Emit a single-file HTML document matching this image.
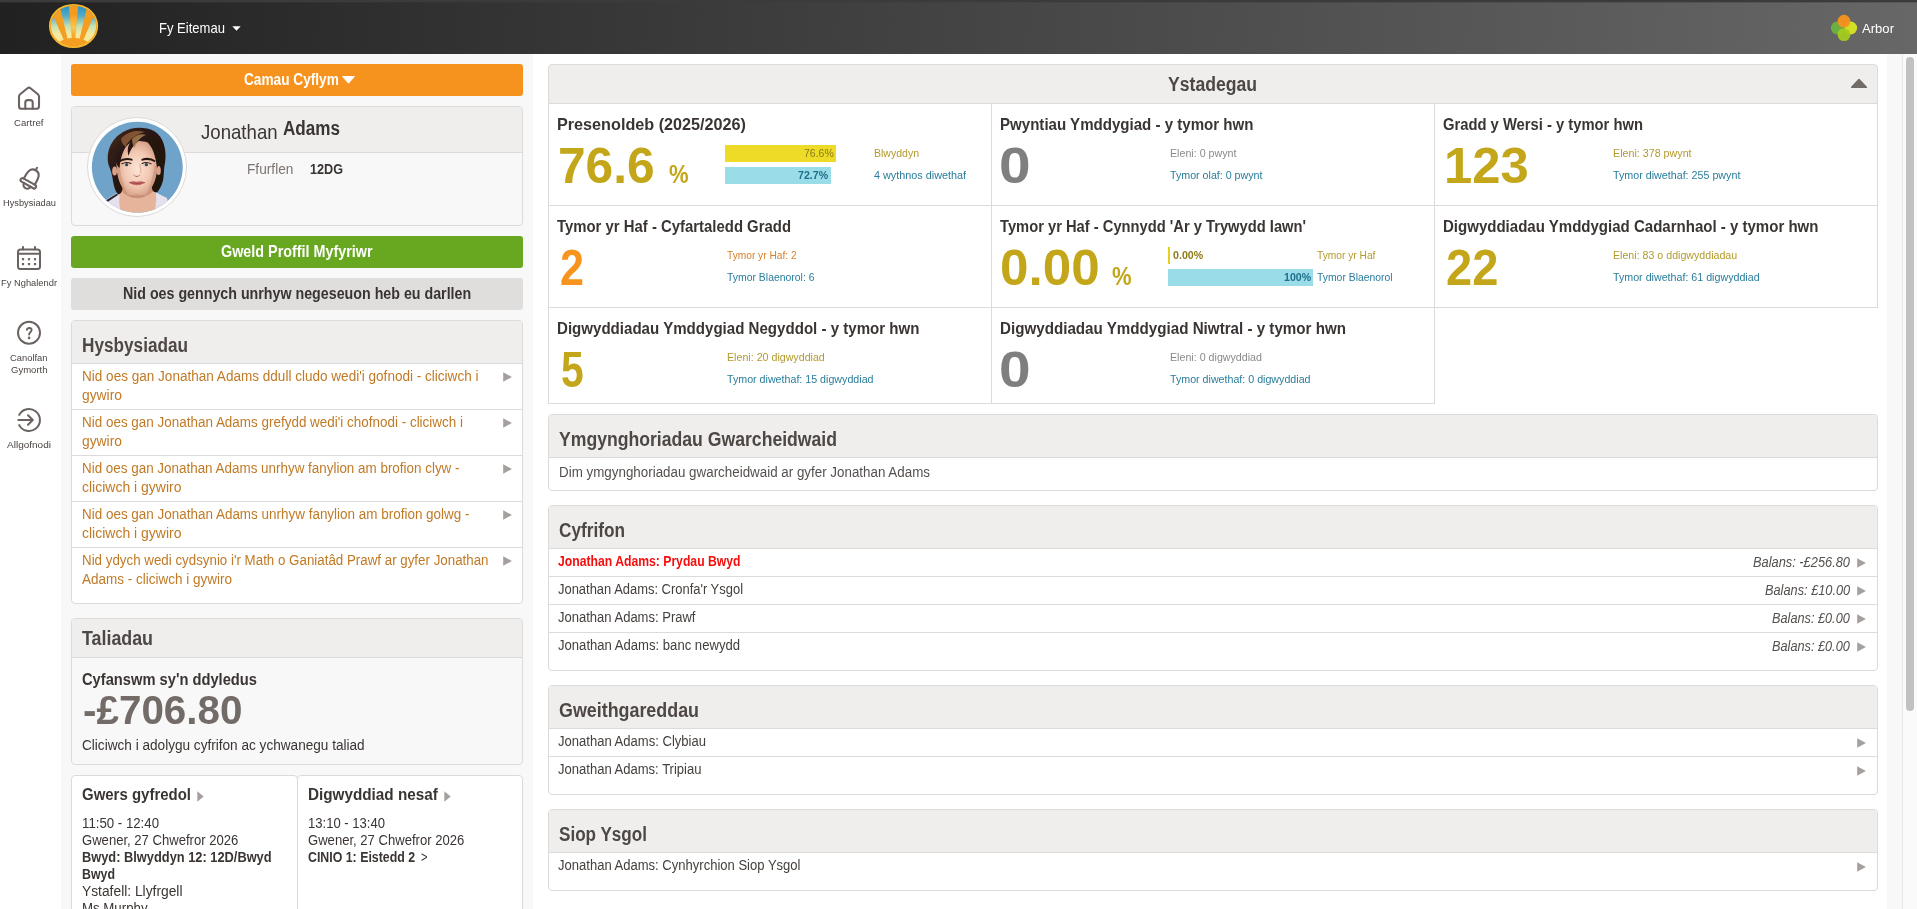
<!DOCTYPE html>
<html><head><meta charset="utf-8"><title>Arbor</title>
<style>
html,body{margin:0;padding:0;}
body{width:1917px;height:909px;overflow:hidden;position:relative;background:#fff;font-family:"Liberation Sans",sans-serif;}
.b{position:absolute;box-sizing:border-box;}
.t{position:absolute;white-space:nowrap;line-height:1;transform-origin:0 0;display:block;}
svg{position:absolute;overflow:visible;}
</style></head><body>
<div class="b" style="left:61px;top:54px;width:472px;height:855px;background:#f8f8f8;"></div>
<div class="b" style="left:1887px;top:54px;width:15px;height:855px;background:#f8f8f8;"></div>
<div class="b" style="left:1902px;top:54px;width:15px;height:855px;background:#fafafa;border-left:1px solid #e8e8e8;"></div>
<div class="b" style="left:1906px;top:57px;width:8px;height:654px;background:#c1c1c1;border-radius:4px;"></div>
<div class="b" style="left:0px;top:0px;width:1917px;height:54px;background:linear-gradient(93deg,#212121 0%,#676767 100%);"></div>
<div class="b" style="left:0px;top:0px;width:1917px;height:2px;background:#3b3b3b;"></div>
<div class="b" style="left:0px;top:2px;width:1917px;height:1px;background:rgba(59,59,59,0.35);"></div>
<svg style="left:0;top:0" width="110" height="54" viewBox="0 0 110 54">
<defs>
<linearGradient id="lsky" x1="0" y1="0" x2="0" y2="1"><stop offset="0.1" stop-color="#2f97c4"/><stop offset="0.28" stop-color="#55abc6"/><stop offset="0.5" stop-color="#c3dfb4"/><stop offset="0.68" stop-color="#f6eaa0"/><stop offset="1" stop-color="#fbe28a"/></linearGradient>
<radialGradient id="lray" cx="73.55" cy="27" r="13" gradientUnits="userSpaceOnUse"><stop offset="0" stop-color="#fcc84e"/><stop offset="1" stop-color="#f39c1f"/></radialGradient>
<clipPath id="lc"><ellipse cx="73.55" cy="26" rx="22.6" ry="20.2"/></clipPath>
</defs>
<ellipse cx="73.55" cy="26" rx="24.6" ry="22.1" fill="#fbbc2c"/>
<ellipse cx="73.55" cy="26" rx="23.3" ry="20.9" fill="#f39d21"/>
<g clip-path="url(#lc)">
<rect x="48" y="3" width="52" height="46" fill="url(#lsky)"/>
<g fill="#f39d21">
<polygon points="46.4,0 58.4,0 67.4,38.6 63.8,40"/>
<polygon points="100.7,0 88.7,0 79.7,38.6 83.3,40"/>
<ellipse cx="73.55" cy="46.9" rx="16.6" ry="9.2"/>
</g>
<polygon points="68.4,0 78.7,0 75.2,40 71.9,40" fill="url(#lray)"/>
</g>
</svg>
<span class="t" id="t1" style="left:159.00px;top:20.00px;font-size:15px;color:#fff;transform:scaleX(0.8700);">Fy Eitemau</span>
<svg style="left:232px;top:26px" width="9" height="5" viewBox="0 0 9 5"><path d="M0.3 0.3h8.4L4.5 4.7z" fill="#fff"/></svg>
<svg style="left:1830px;top:14px" width="28" height="28" viewBox="0 0 28 28">
<circle cx="7.3" cy="14" r="6.4" fill="#6db33f" fill-opacity="0.95"/>
<circle cx="20.7" cy="14" r="6.4" fill="#d8e622" fill-opacity="0.95"/>
<circle cx="14" cy="20.6" r="6.4" fill="#a6ce1c" fill-opacity="0.92"/>
<circle cx="14" cy="7.2" r="6.4" fill="#f7941d" fill-opacity="0.95"/>
</svg>
<span class="t" id="t2" style="left:1861.70px;top:22.00px;font-size:13.5px;color:#fff;transform:scaleX(0.9692);">Arbor</span>
<svg style="left:16px;top:84px" width="26" height="28" viewBox="0 0 26 28" fill="none" stroke="#6b6361" stroke-width="2.1" stroke-linejoin="round" stroke-linecap="round">
<path d="M3 12.6 Q3 11.2 4.1 10.3 L11.5 4.2 Q13 3 14.5 4.2 L21.9 10.3 Q23 11.2 23 12.6 V22.2 a2.6 2.6 0 0 1 -2.6 2.6 H5.6 a2.6 2.6 0 0 1 -2.6 -2.6 Z"/>
<path d="M9.3 24.6 V18.6 a2.5 2.5 0 0 1 2.5 -2.5 h2.4 a2.5 2.5 0 0 1 2.5 2.5 V24.6"/>
</svg>
<span class="t" id="t3" style="left:14.25px;top:117.90px;font-size:10.5px;color:#4a4543;transform:scale(0.9192,0.9);">Cartref</span>
<svg style="left:0px;top:0px" width="60" height="200" viewBox="0 0 60 200" fill="none" stroke="#6b6361" stroke-width="2.1" stroke-linejoin="round" stroke-linecap="round">
<g transform="translate(28.3 183.3) rotate(29.5)">
<rect x="-8.6" y="-1.9" width="17.2" height="3.8" rx="1.9"/>
<path d="M-6.3 -1.9 C-6.3 -7 -7 -15 0 -15 C7 -15 6.3 -7 6.3 -1.9"/>
<path d="M0 -15.2 V-17.8"/>
<path d="M-3.9 1.9 A3.8 3.7 0 0 0 3.7 1.9"/>
</g>
</svg>
<span class="t" id="t4" style="left:2.50px;top:197.90px;font-size:10.5px;color:#4a4543;transform:scale(0.8815,0.9);">Hysbysiadau</span>
<svg style="left:16px;top:244px" width="26" height="28" viewBox="0 0 26 28" fill="none" stroke="#6b6361" stroke-width="2" stroke-linejoin="round" stroke-linecap="round">
<rect x="2" y="5.5" width="22" height="19.5" rx="2.5"/>
<path d="M2 9.7h22M7 2.9v2.6M19 2.9v2.6"/>
<g stroke="none" fill="#6b6361"><rect x="5.9" y="14.1" width="2.2" height="2.2"/><rect x="11.9" y="14.1" width="2.2" height="2.2"/><rect x="17.9" y="14.1" width="2.2" height="2.2"/><rect x="5.9" y="19" width="2.2" height="2.2"/><rect x="11.9" y="19" width="2.2" height="2.2"/><rect x="17.9" y="19" width="2.2" height="2.2"/></g>
</svg>
<span class="t" id="t5" style="left:1.00px;top:277.90px;font-size:10.5px;color:#4a4543;transform:scale(0.8884,0.9);">Fy Nghalendr</span>
<svg style="left:16px;top:320px" width="26" height="26" viewBox="0 0 26 26" fill="none" stroke="#6b6361" stroke-width="2">
<circle cx="13" cy="12.8" r="11"/>
</svg>
<svg style="left:0;top:0" width="60" height="360" viewBox="0 0 60 360" fill="none" stroke="#6b6361" stroke-width="1.9" stroke-linecap="round" stroke-linejoin="round">
<path d="M26.9 329.9 C27.1 328.6 28.1 328 29.3 328 C30.7 328 31.6 328.9 31.6 330.1 C31.6 331.2 30.9 331.8 30.1 332.5 C29.4 333.1 29.1 333.6 29.1 334.5"/>
<circle cx="29.1" cy="337.9" r="0.6" stroke-width="1.4"/>
</svg>
<span class="t" id="t6" style="left:10.25px;top:352.90px;font-size:10.5px;color:#4a4543;transform:scale(0.8922,0.9);">Canolfan</span>
<span class="t" id="t7" style="left:10.75px;top:364.90px;font-size:10.5px;color:#4a4543;transform:scale(0.9065,0.9);">Gymorth</span>
<svg style="left:16px;top:407px" width="27" height="26" viewBox="0 0 27 26" fill="none" stroke="#6b6361" stroke-width="2" stroke-linecap="round" stroke-linejoin="round">
<path d="M3.2 7.9 A11 11 0 1 1 3.2 18.1"/>
<path d="M2.3 13 H16.6 M12 8.2 L16.8 13 L12 17.8"/>
</svg>
<span class="t" id="t8" style="left:7.00px;top:439.90px;font-size:10.5px;color:#4a4543;transform:scale(0.9539,0.9);">Allgofnodi</span>
<div class="b" style="left:71px;top:64px;width:452px;height:32px;background:#f6921e;border-radius:3px;"></div>
<span class="t" id="t9" style="left:243.60px;top:71.00px;font-size:16.5px;color:#fff;font-weight:700;transform:scaleX(0.8270);">Camau Cyflym</span>
<svg style="left:342px;top:76px" width="13" height="8" viewBox="0 0 13 8"><path d="M0.6 0.6h11.8L6.5 7.2z" fill="#fff" stroke="#fff" stroke-width="1" stroke-linejoin="round"/></svg>
<div class="b" style="left:71px;top:106px;width:452px;height:120px;background:#f8f8f8;border:1px solid #dddbda;border-radius:4px;"></div>
<div class="b" style="left:72px;top:107px;width:450px;height:45px;background:#efeeed;border-radius:3px 3px 0 0;border-bottom:1px solid #dddbda;height:46px;"></div>
<span class="t" id="t10" style="left:200.80px;top:121.00px;font-size:21px;color:#3a3533;transform:scaleX(0.8863);">Jonathan</span>
<span class="t" id="t11" style="left:283.40px;top:118.00px;font-size:20px;color:#3a3533;font-weight:700;transform:scaleX(0.8545);">Adams</span>
<span class="t" id="t12" style="left:246.80px;top:162.00px;font-size:14px;color:#7d7471;transform:scaleX(0.9775);">Ffurflen</span>
<span class="t" id="t13" style="left:310.00px;top:162.00px;font-size:14px;color:#3a3533;font-weight:700;transform:scaleX(0.9022);">12DG</span>
<svg style="left:87px;top:117px" width="100" height="100" viewBox="0 0 100 100">
<defs>
<clipPath id="avc"><circle cx="50.3" cy="50.2" r="45.4"/></clipPath>
<filter id="avb" x="-10%" y="-10%" width="120%" height="120%"><feGaussianBlur stdDeviation="0.55"/></filter>
<radialGradient id="avf" cx="50%" cy="50%" r="62%"><stop offset="0" stop-color="#fbe3d6"/><stop offset="0.5" stop-color="#f2c8b2"/><stop offset="1" stop-color="#c98d74"/></radialGradient>
<linearGradient id="avh" x1="0" y1="0" x2="1" y2="1"><stop offset="0" stop-color="#4a2a1c"/><stop offset="0.3" stop-color="#2c1a13"/><stop offset="1" stop-color="#1c110d"/></linearGradient>
</defs>
<circle cx="50" cy="50" r="49.5" fill="#fff" stroke="#dcdad9" stroke-width="1"/>
<g clip-path="url(#avc)">
<rect x="0" y="0" width="100" height="100" fill="#6fa3ca"/>
<g filter="url(#avb)">
<!-- shirt -->
<path d="M17 84 L33 74 L36 100 L14 100 Z" fill="#e6e0ec"/>
<path d="M68 75 L80 81 L84 100 L66 100 Z" fill="#e6e0ec"/>
<path d="M17 84.5 L30 76.5 L31 78 L19 86Z" fill="#2a2630"/>
<!-- neck -->
<path d="M32 66 L32.5 80 Q31 90 36 100 L66 100 Q70 88 69 78 L69 64 Z" fill="#e6b49b"/>
<path d="M33 73 Q50 90 69 72 L69 67 Q50 84 33 68Z" fill="#c48a70" opacity="0.75"/>
<!-- hair back -->
<path d="M31 77.5 C25 70 27 60 22 49 C18 36 24 22 36 15 C45 9.5 58 9.5 67 14 C77 20 80 34 78 46 C75.5 56 79 64 70.5 75 C65 77 64 70 64 62 L36 62 C36 70 36 77 31 77.5 Z" fill="url(#avh)"/>
<!-- ears -->
<ellipse cx="27.6" cy="54" rx="2.4" ry="4.6" fill="#dba088"/>
<ellipse cx="71.6" cy="53.5" rx="2.2" ry="4.6" fill="#dba088"/>
<!-- face -->
<path d="M29.5 42 C29 28 38 24 50 24 C62 24 71 28 70.5 42 C71 56 68.5 66 62 74.5 C57 81.5 43 81.5 38 74.5 C31.5 66 29 56 29.5 42 Z" fill="url(#avf)"/>
<!-- cheek shadow -->
<path d="M30 50 C31 62 34 70 40 77 C36 66 33.5 58 32.5 48Z" fill="#c48a72" opacity="0.5"/>
<path d="M70 50 C69 62 66 70 60 77 C64 66 66.5 58 67.5 48Z" fill="#c48a72" opacity="0.5"/>
<!-- fringe -->
<path d="M58 20 C50 24 44 30 41.5 39 C40 33 41 29 43 26 C37 30 34 38 32.5 51 C28.5 48 27.5 40 28.5 34 C29.5 24 38 15 50 13.5 C60 12.5 70.5 17 72.5 28 C74.5 36 73.5 45 70 51 C69 42 67 33 62 27 C60 24.5 59 22.5 58 20 Z" fill="url(#avh)"/>
<path d="M34 22 C40 14 50 12.5 58 15 C50 17 43 21 38.5 30 C36 28 34.5 25 34 22Z" fill="#8e5c3a" opacity="0.85"/>
<path d="M45 22 C50 17.5 55 16.5 59 18 C53.5 20 50 24 47.5 31 C46 28 45 25 45 22Z" fill="#b08258" opacity="0.8"/>
<!-- eyebrows -->
<path d="M31.2 44 Q38 39 45.5 42 L45.5 43.8 Q38 41.6 31.8 45.6Z" fill="#25150f"/>
<path d="M54.5 42 Q62 39 68.4 43.6 L68 45.2 Q62 41.6 54.5 43.8Z" fill="#25150f"/>
<!-- eyes -->
<ellipse cx="39.3" cy="47.8" rx="3.8" ry="1.4" fill="#dcc8c0"/>
<ellipse cx="59.7" cy="47.8" rx="3.8" ry="1.4" fill="#dcc8c0"/>
<circle cx="39.6" cy="47.7" r="1.6" fill="#3c4450"/>
<circle cx="59.4" cy="47.7" r="1.6" fill="#3c4450"/>
<path d="M34.6 47 Q39.5 44.2 44.3 46.8" stroke="#2e1c17" stroke-width="1.1" fill="none"/>
<path d="M54.7 46.8 Q59.5 44.2 64.4 47" stroke="#2e1c17" stroke-width="1.1" fill="none"/>
<!-- nose -->
<path d="M45.5 57 Q49.5 61 54.5 57 Q52 60 49.8 60.2 Q47.5 60 45.5 57Z" fill="#b4715a"/>
<path d="M53 47 L54 56" stroke="#dba790" stroke-width="1.3" fill="none" opacity="0.7"/>
<!-- mouth -->
<path d="M42 65.4 Q46 63.6 49.7 64.8 Q53.5 63.6 58 65.4 Q50 71 42 65.4Z" fill="#c9676a"/>
<path d="M42 65.6 Q50 67.4 58 65.6" stroke="#96403f" stroke-width="0.8" fill="none"/>
<ellipse cx="50" cy="79" rx="8" ry="1.4" fill="#b98068" opacity="0.45"/>
</g>
</g>
</svg>

<div class="b" style="left:71px;top:236px;width:452px;height:32px;background:#68a821;border-radius:3px;"></div>
<span class="t" id="t14" style="left:221.30px;top:243.00px;font-size:16.5px;color:#fff;font-weight:700;transform:scaleX(0.8702);">Gweld Proffil Myfyriwr</span>
<div class="b" style="left:71px;top:278px;width:452px;height:32px;background:#e0dedd;border-radius:3px;"></div>
<span class="t" id="t15" style="left:122.90px;top:285.00px;font-size:16.5px;color:#3a3533;font-weight:700;transform:scaleX(0.8631);">Nid oes gennych unrhyw negeseuon heb eu darllen</span>
<div class="b" style="left:71px;top:320px;width:452px;height:284px;background:#fff;border:1px solid #dddbda;border-radius:4px;"></div>
<div class="b" style="left:72px;top:321px;width:450px;height:43px;background:#efeeed;border-radius:3px 3px 0 0;border-bottom:1px solid #dddbda;"></div>
<span class="t" id="t16" style="left:82.00px;top:335.00px;font-size:20px;color:#4e4845;font-weight:700;transform:scaleX(0.8591);">Hysbysiadau</span>
<span class="t" id="t17" style="left:82.30px;top:369.00px;font-size:14px;color:#c07a26;transform:scaleX(0.9678);">Nid oes gan Jonathan Adams ddull cludo wedi'i gofnodi - cliciwch i</span>
<span class="t" id="t18" style="left:82.30px;top:388.00px;font-size:14px;color:#c07a26;transform:scaleX(0.9884);">gywiro</span>
<svg style="left:502.6px;top:372.4px" width="9" height="10" viewBox="0 0 9 10"><path d="M0.2 0.2v9.6L8.9 5z" fill="#a5a09e"/></svg>
<div class="b" style="left:72px;top:409px;width:450px;height:1px;background:#dddbda;"></div>
<span class="t" id="t19" style="left:82.30px;top:415.00px;font-size:14px;color:#c07a26;transform:scaleX(0.9610);">Nid oes gan Jonathan Adams grefydd wedi'i chofnodi - cliciwch i</span>
<span class="t" id="t20" style="left:82.30px;top:434.00px;font-size:14px;color:#c07a26;transform:scaleX(0.9884);">gywiro</span>
<svg style="left:502.6px;top:418.4px" width="9" height="10" viewBox="0 0 9 10"><path d="M0.2 0.2v9.6L8.9 5z" fill="#a5a09e"/></svg>
<div class="b" style="left:72px;top:455px;width:450px;height:1px;background:#dddbda;"></div>
<span class="t" id="t21" style="left:82.30px;top:461.00px;font-size:14px;color:#c07a26;transform:scaleX(0.9587);">Nid oes gan Jonathan Adams unrhyw fanylion am brofion clyw -</span>
<span class="t" id="t22" style="left:82.30px;top:480.00px;font-size:14px;color:#c07a26;transform:scaleX(0.9992);">cliciwch i gywiro</span>
<svg style="left:502.6px;top:464.4px" width="9" height="10" viewBox="0 0 9 10"><path d="M0.2 0.2v9.6L8.9 5z" fill="#a5a09e"/></svg>
<div class="b" style="left:72px;top:501px;width:450px;height:1px;background:#dddbda;"></div>
<span class="t" id="t23" style="left:82.30px;top:507.00px;font-size:14px;color:#c07a26;transform:scaleX(0.9612);">Nid oes gan Jonathan Adams unrhyw fanylion am brofion golwg -</span>
<span class="t" id="t24" style="left:82.30px;top:526.00px;font-size:14px;color:#c07a26;transform:scaleX(0.9992);">cliciwch i gywiro</span>
<svg style="left:502.6px;top:510.4px" width="9" height="10" viewBox="0 0 9 10"><path d="M0.2 0.2v9.6L8.9 5z" fill="#a5a09e"/></svg>
<div class="b" style="left:72px;top:547px;width:450px;height:1px;background:#dddbda;"></div>
<span class="t" id="t25" style="left:82.30px;top:553.00px;font-size:14px;color:#c07a26;transform:scaleX(0.9525);">Nid ydych wedi cydsynio i'r Math o Ganiatâd Prawf ar gyfer Jonathan</span>
<span class="t" id="t26" style="left:82.30px;top:572.00px;font-size:14px;color:#c07a26;transform:scaleX(0.9640);">Adams - cliciwch i gywiro</span>
<svg style="left:502.6px;top:556.4px" width="9" height="10" viewBox="0 0 9 10"><path d="M0.2 0.2v9.6L8.9 5z" fill="#a5a09e"/></svg>
<div class="b" style="left:71px;top:618px;width:452px;height:147px;background:#f8f8f8;border:1px solid #dddbda;border-radius:4px;"></div>
<div class="b" style="left:72px;top:619px;width:450px;height:39px;background:#efeeed;border-radius:3px 3px 0 0;border-bottom:1px solid #dddbda;"></div>
<span class="t" id="t27" style="left:82.40px;top:628.00px;font-size:20px;color:#4e4845;font-weight:700;transform:scaleX(0.8913);">Taliadau</span>
<span class="t" id="t28" style="left:82.00px;top:671.00px;font-size:17px;color:#3a3533;font-weight:700;transform:scaleX(0.8645);">Cyfanswm sy'n ddyledus</span>
<span class="t" id="t29" style="left:82.60px;top:690.00px;font-size:41px;color:#736b68;font-weight:700;transform:scaleX(0.9854);">-£706.80</span>
<span class="t" id="t30" style="left:82.00px;top:738.00px;font-size:14px;color:#3a3533;transform:scaleX(0.9713);">Cliciwch i adolygu cyfrifon ac ychwanegu taliad</span>
<div class="b" style="left:71px;top:775px;width:227px;height:140px;background:#fff;border:1px solid #dddbda;border-radius:4px 4px 0 0;"></div>
<div class="b" style="left:297px;top:775px;width:226px;height:140px;background:#fff;border:1px solid #dddbda;border-radius:4px 4px 0 0;"></div>
<span class="t" id="t31" style="left:82.00px;top:786.00px;font-size:17px;color:#3a3533;font-weight:700;transform:scaleX(0.8807);">Gwers gyfredol</span>
<svg style="left:197px;top:791px" width="7" height="11" viewBox="0 0 7 11"><path d="M0.3 0.2v10.6L6.7 5.5z" fill="#a5a09e"/></svg>
<span class="t" id="t32" style="left:82.00px;top:816.00px;font-size:14px;color:#3a3533;transform:scaleX(0.9450);">11:50 - 12:40</span>
<span class="t" id="t33" style="left:82.00px;top:833.00px;font-size:14px;color:#3a3533;transform:scaleX(0.9341);">Gwener, 27 Chwefror 2026</span>
<span class="t" id="t34" style="left:82.00px;top:850.00px;font-size:14px;color:#3a3533;font-weight:700;transform:scaleX(0.9162);">Bwyd: Blwyddyn 12: 12D/Bwyd</span>
<span class="t" id="t35" style="left:82.00px;top:867.00px;font-size:14px;color:#3a3533;font-weight:700;transform:scaleX(0.8837);">Bwyd</span>
<span class="t" id="t36" style="left:82.00px;top:884.00px;font-size:14px;color:#3a3533;transform:scaleX(0.9859);">Ystafell: Llyfrgell</span>
<span class="t" id="t37" style="left:82.00px;top:901.00px;font-size:14px;color:#3a3533;transform:scaleX(0.9461);">Ms Murphy</span>
<span class="t" id="t38" style="left:308.00px;top:786.00px;font-size:17px;color:#3a3533;font-weight:700;transform:scaleX(0.8981);">Digwyddiad nesaf</span>
<svg style="left:444px;top:791px" width="7" height="11" viewBox="0 0 7 11"><path d="M0.3 0.2v10.6L6.7 5.5z" fill="#a5a09e"/></svg>
<span class="t" id="t39" style="left:308.00px;top:816.00px;font-size:14px;color:#3a3533;transform:scaleX(0.9332);">13:10 - 13:40</span>
<span class="t" id="t40" style="left:308.00px;top:833.00px;font-size:14px;color:#3a3533;transform:scaleX(0.9341);">Gwener, 27 Chwefror 2026</span>
<span class="t" id="t41" style="left:308.30px;top:850.00px;font-size:14px;color:#3a3533;font-weight:700;transform:scaleX(0.8825);">CINIO 1: Eistedd 2</span>
<span class="t" id="t42" style="left:420.50px;top:850.00px;font-size:14px;color:#3a3533;transform:scaleX(0.7939);">&gt;</span>
<div class="b" style="left:548px;top:64px;width:1330px;height:40px;background:#efeeed;border:1px solid #dddbda;border-radius:4px 4px 0 0;"></div>
<span class="t" id="t43" style="left:1168.00px;top:74.00px;font-size:20px;color:#4e4845;font-weight:700;transform:scaleX(0.8798);">Ystadegau</span>
<svg style="left:1850px;top:78px" width="18" height="11" viewBox="0 0 18 11"><path d="M9 1.5L16.3 9.3H1.7z" fill="#736b68" stroke="#736b68" stroke-width="1.6" stroke-linejoin="round"/></svg>
<div class="b" style="left:548px;top:103px;width:444px;height:103px;background:#fff;border:1px solid #dddbda;"></div>
<div class="b" style="left:991px;top:103px;width:444px;height:103px;background:#fff;border:1px solid #dddbda;"></div>
<div class="b" style="left:1434px;top:103px;width:444px;height:103px;background:#fff;border:1px solid #dddbda;"></div>
<div class="b" style="left:548px;top:205px;width:444px;height:103px;background:#fff;border:1px solid #dddbda;"></div>
<div class="b" style="left:991px;top:205px;width:444px;height:103px;background:#fff;border:1px solid #dddbda;"></div>
<div class="b" style="left:1434px;top:205px;width:444px;height:103px;background:#fff;border:1px solid #dddbda;"></div>
<div class="b" style="left:548px;top:307px;width:444px;height:97px;background:#fff;border:1px solid #dddbda;"></div>
<div class="b" style="left:991px;top:307px;width:444px;height:97px;background:#fff;border:1px solid #dddbda;"></div>
<span class="t" id="t44" style="left:556.60px;top:116.00px;font-size:17px;color:#3a3533;font-weight:700;transform:scaleX(0.9524);">Presenoldeb (2025/2026)</span>
<span class="t" id="t45" style="left:558.30px;top:141.00px;font-size:50px;color:#c4a61a;font-weight:700;transform:scaleX(0.9930);">76.6</span>
<span class="t" id="t46" style="left:668.80px;top:161.00px;font-size:26px;color:#c4a61a;font-weight:700;transform:scaleX(0.8476);">%</span>
<div class="b" style="left:725px;top:145px;width:111px;height:17px;background:#eedb27;"></div>
<span class="t" id="t47" style="left:804.00px;top:148.00px;font-size:11.5px;color:#8c7b18;transform:scaleX(0.9108);">76.6%</span>
<div class="b" style="left:725px;top:167px;width:106px;height:17px;background:#9adce8;"></div>
<span class="t" id="t48" style="left:798.40px;top:170.00px;font-size:11.5px;color:#1d6f8c;font-weight:700;transform:scaleX(0.9230);">72.7%</span>
<span class="t" id="t49" style="left:873.70px;top:148.00px;font-size:11.5px;color:#b39a2e;transform:scaleX(0.9143);">Blwyddyn</span>
<span class="t" id="t50" style="left:873.70px;top:170.00px;font-size:11.5px;color:#2a7d9c;transform:scaleX(0.9416);">4 wythnos diwethaf</span>
<span class="t" id="t51" style="left:999.60px;top:116.00px;font-size:17px;color:#3a3533;font-weight:700;transform:scaleX(0.8867);">Pwyntiau Ymddygiad - y tymor hwn</span>
<span class="t" id="t52" style="left:999.40px;top:141.00px;font-size:50px;color:#7f7f7f;font-weight:700;transform:scaleX(1.1370);">0</span>
<span class="t" id="t53" style="left:1169.80px;top:148.00px;font-size:11.5px;color:#8a8a8a;transform:scaleX(0.9286);">Eleni: 0 pwynt</span>
<span class="t" id="t54" style="left:1169.80px;top:170.00px;font-size:11.5px;color:#2a7d9c;transform:scaleX(0.9276);">Tymor olaf: 0 pwynt</span>
<span class="t" id="t55" style="left:1442.60px;top:116.00px;font-size:17px;color:#3a3533;font-weight:700;transform:scaleX(0.8689);">Gradd y Wersi - y tymor hwn</span>
<span class="t" id="t56" style="left:1443.80px;top:141.00px;font-size:50px;color:#c4a61a;font-weight:700;transform:scaleX(1.0150);">123</span>
<span class="t" id="t57" style="left:1612.80px;top:148.00px;font-size:11.5px;color:#b39a2e;transform:scaleX(0.9314);">Eleni: 378 pwynt</span>
<span class="t" id="t58" style="left:1612.80px;top:170.00px;font-size:11.5px;color:#2a7d9c;transform:scaleX(0.9313);">Tymor diwethaf: 255 pwynt</span>
<span class="t" id="t59" style="left:556.60px;top:218.00px;font-size:17px;color:#3a3533;font-weight:700;transform:scaleX(0.8763);">Tymor yr Haf - Cyfartaledd Gradd</span>
<span class="t" id="t60" style="left:560.30px;top:243.00px;font-size:50px;color:#f7941d;font-weight:700;transform:scaleX(0.8620);">2</span>
<span class="t" id="t61" style="left:726.80px;top:250.00px;font-size:11.5px;color:#d5822f;transform:scaleX(0.8854);">Tymor yr Haf: 2</span>
<span class="t" id="t62" style="left:726.80px;top:272.00px;font-size:11.5px;color:#2a7d9c;transform:scaleX(0.9066);">Tymor Blaenorol: 6</span>
<span class="t" id="t63" style="left:999.60px;top:218.00px;font-size:17px;color:#3a3533;font-weight:700;transform:scaleX(0.8656);">Tymor yr Haf - Cynnydd 'Ar y Trywydd Iawn'</span>
<span class="t" id="t64" style="left:999.70px;top:243.00px;font-size:50px;color:#c4a61a;font-weight:700;transform:scaleX(1.0240);">0.00</span>
<span class="t" id="t65" style="left:1112.30px;top:263.00px;font-size:26px;color:#c4a61a;font-weight:700;transform:scaleX(0.8476);">%</span>
<div class="b" style="left:1168px;top:247px;width:2px;height:17px;background:#e8d020;"></div>
<span class="t" id="t66" style="left:1172.50px;top:250.00px;font-size:11.5px;color:#8c7b18;font-weight:700;transform:scaleX(0.9261);">0.00%</span>
<div class="b" style="left:1168px;top:269px;width:145.3px;height:17px;background:#9adce8;"></div>
<span class="t" id="t67" style="left:1283.70px;top:272.00px;font-size:11.5px;color:#1d6f8c;font-weight:700;transform:scaleX(0.9211);">100%</span>
<span class="t" id="t68" style="left:1317.00px;top:250.00px;font-size:11.5px;color:#b39a2e;transform:scaleX(0.8874);">Tymor yr Haf</span>
<span class="t" id="t69" style="left:1317.00px;top:272.00px;font-size:11.5px;color:#2a7d9c;transform:scaleX(0.9029);">Tymor Blaenorol</span>
<span class="t" id="t70" style="left:1442.60px;top:218.00px;font-size:17px;color:#3a3533;font-weight:700;transform:scaleX(0.8840);">Digwyddiadau Ymddygiad Cadarnhaol - y tymor hwn</span>
<span class="t" id="t71" style="left:1446.10px;top:243.00px;font-size:50px;color:#c4a61a;font-weight:700;transform:scaleX(0.9400);">22</span>
<span class="t" id="t72" style="left:1612.80px;top:250.00px;font-size:11.5px;color:#b39a2e;transform:scaleX(0.9249);">Eleni: 83 o ddigwyddiadau</span>
<span class="t" id="t73" style="left:1612.80px;top:272.00px;font-size:11.5px;color:#2a7d9c;transform:scaleX(0.9285);">Tymor diwethaf: 61 digwyddiad</span>
<span class="t" id="t74" style="left:556.60px;top:320.00px;font-size:17px;color:#3a3533;font-weight:700;transform:scaleX(0.8870);">Digwyddiadau Ymddygiad Negyddol - y tymor hwn</span>
<span class="t" id="t75" style="left:561.10px;top:345.00px;font-size:50px;color:#c4a61a;font-weight:700;transform:scaleX(0.8150);">5</span>
<span class="t" id="t76" style="left:726.80px;top:352.00px;font-size:11.5px;color:#b39a2e;transform:scaleX(0.9270);">Eleni: 20 digwyddiad</span>
<span class="t" id="t77" style="left:726.80px;top:374.00px;font-size:11.5px;color:#2a7d9c;transform:scaleX(0.9279);">Tymor diwethaf: 15 digwyddiad</span>
<span class="t" id="t78" style="left:999.60px;top:320.00px;font-size:17px;color:#3a3533;font-weight:700;transform:scaleX(0.8920);">Digwyddiadau Ymddygiad Niwtral - y tymor hwn</span>
<span class="t" id="t79" style="left:999.40px;top:345.00px;font-size:50px;color:#7f7f7f;font-weight:700;transform:scaleX(1.1370);">0</span>
<span class="t" id="t80" style="left:1169.80px;top:352.00px;font-size:11.5px;color:#8a8a8a;transform:scaleX(0.9284);">Eleni: 0 digwyddiad</span>
<span class="t" id="t81" style="left:1169.80px;top:374.00px;font-size:11.5px;color:#2a7d9c;transform:scaleX(0.9274);">Tymor diwethaf: 0 digwyddiad</span>
<div class="b" style="left:548px;top:414px;width:1330px;height:77px;background:#fff;border:1px solid #dddbda;border-radius:4px;"></div>
<div class="b" style="left:549px;top:415px;width:1328px;height:43px;background:#efeeed;border-radius:3px 3px 0 0;border-bottom:1px solid #dddbda;"></div>
<span class="t" id="t82" style="left:559.20px;top:429.00px;font-size:20px;color:#4e4845;font-weight:700;transform:scaleX(0.8808);">Ymgynghoriadau Gwarcheidwaid</span>
<span class="t" id="t83" style="left:558.80px;top:465.00px;font-size:14px;color:#55504e;transform:scaleX(0.9554);">Dim ymgynghoriadau gwarcheidwaid ar gyfer Jonathan Adams</span>
<div class="b" style="left:548px;top:505px;width:1330px;height:166px;background:#fff;border:1px solid #dddbda;border-radius:4px;"></div>
<div class="b" style="left:549px;top:506px;width:1328px;height:43px;background:#efeeed;border-radius:3px 3px 0 0;border-bottom:1px solid #dddbda;"></div>
<span class="t" id="t84" style="left:559.20px;top:520.00px;font-size:20px;color:#4e4845;font-weight:700;transform:scaleX(0.8608);">Cyfrifon</span>
<span class="t" id="t85" style="left:558.00px;top:554.00px;font-size:14px;color:#f80d0d;font-weight:700;transform:scaleX(0.8710);">Jonathan Adams: Prydau Bwyd</span>
<span class="t" id="t86" style="left:1753.20px;top:555.00px;font-size:14px;color:#55504e;font-style:italic;transform:scaleX(0.9163);">Balans: -£256.80</span>
<svg style="left:1857px;top:557.5px" width="9" height="10" viewBox="0 0 9 10"><path d="M0.2 0.2v9.6L8.9 5z" fill="#a5a09e"/></svg>
<div class="b" style="left:549px;top:576px;width:1328px;height:1px;background:#dddbda;"></div>
<span class="t" id="t87" style="left:558.00px;top:582.00px;font-size:14px;color:#45403e;transform:scaleX(0.9246);">Jonathan Adams: Cronfa'r Ysgol</span>
<span class="t" id="t88" style="left:1765.00px;top:583.00px;font-size:14px;color:#55504e;font-style:italic;transform:scaleX(0.9121);">Balans: £10.00</span>
<svg style="left:1857px;top:585.5px" width="9" height="10" viewBox="0 0 9 10"><path d="M0.2 0.2v9.6L8.9 5z" fill="#a5a09e"/></svg>
<div class="b" style="left:549px;top:604px;width:1328px;height:1px;background:#dddbda;"></div>
<span class="t" id="t89" style="left:558.00px;top:610.00px;font-size:14px;color:#45403e;transform:scaleX(0.9298);">Jonathan Adams: Prawf</span>
<span class="t" id="t90" style="left:1772.40px;top:611.00px;font-size:14px;color:#55504e;font-style:italic;transform:scaleX(0.9086);">Balans: £0.00</span>
<svg style="left:1857px;top:613.5px" width="9" height="10" viewBox="0 0 9 10"><path d="M0.2 0.2v9.6L8.9 5z" fill="#a5a09e"/></svg>
<div class="b" style="left:549px;top:632px;width:1328px;height:1px;background:#dddbda;"></div>
<span class="t" id="t91" style="left:558.00px;top:638.00px;font-size:14px;color:#45403e;transform:scaleX(0.9354);">Jonathan Adams: banc newydd</span>
<span class="t" id="t92" style="left:1772.40px;top:639.00px;font-size:14px;color:#55504e;font-style:italic;transform:scaleX(0.9086);">Balans: £0.00</span>
<svg style="left:1857px;top:641.5px" width="9" height="10" viewBox="0 0 9 10"><path d="M0.2 0.2v9.6L8.9 5z" fill="#a5a09e"/></svg>
<div class="b" style="left:548px;top:685px;width:1330px;height:110px;background:#fff;border:1px solid #dddbda;border-radius:4px;"></div>
<div class="b" style="left:549px;top:686px;width:1328px;height:43px;background:#efeeed;border-radius:3px 3px 0 0;border-bottom:1px solid #dddbda;"></div>
<span class="t" id="t93" style="left:559.20px;top:700.00px;font-size:20px;color:#4e4845;font-weight:700;transform:scaleX(0.8934);">Gweithgareddau</span>
<span class="t" id="t94" style="left:558.00px;top:734.00px;font-size:14px;color:#45403e;transform:scaleX(0.9322);">Jonathan Adams: Clybiau</span>
<svg style="left:1857px;top:737.5px" width="9" height="10" viewBox="0 0 9 10"><path d="M0.2 0.2v9.6L8.9 5z" fill="#a5a09e"/></svg>
<div class="b" style="left:549px;top:756px;width:1328px;height:1px;background:#dddbda;"></div>
<span class="t" id="t95" style="left:558.00px;top:762.00px;font-size:14px;color:#45403e;transform:scaleX(0.9312);">Jonathan Adams: Tripiau</span>
<svg style="left:1857px;top:765.5px" width="9" height="10" viewBox="0 0 9 10"><path d="M0.2 0.2v9.6L8.9 5z" fill="#a5a09e"/></svg>
<div class="b" style="left:548px;top:809px;width:1330px;height:82px;background:#fff;border:1px solid #dddbda;border-radius:4px;"></div>
<div class="b" style="left:549px;top:810px;width:1328px;height:43px;background:#efeeed;border-radius:3px 3px 0 0;border-bottom:1px solid #dddbda;"></div>
<span class="t" id="t96" style="left:559.20px;top:824.00px;font-size:20px;color:#4e4845;font-weight:700;transform:scaleX(0.8545);">Siop Ysgol</span>
<span class="t" id="t97" style="left:558.00px;top:858.00px;font-size:14px;color:#45403e;transform:scaleX(0.9310);">Jonathan Adams: Cynhyrchion Siop Ysgol</span>
<svg style="left:1857px;top:861.5px" width="9" height="10" viewBox="0 0 9 10"><path d="M0.2 0.2v9.6L8.9 5z" fill="#a5a09e"/></svg>
</body></html>
